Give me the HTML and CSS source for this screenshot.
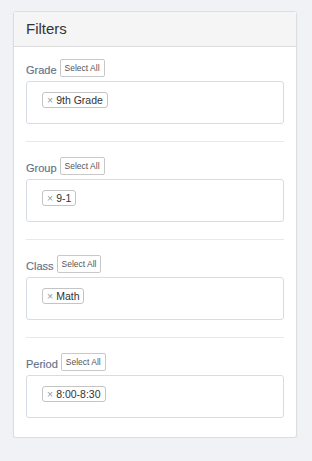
FILE: index.html
```html
<!DOCTYPE html>
<html lang="en">
<head>
    <meta charset="UTF-8">
    <meta name="viewport" content="width=device-width, initial-scale=1.0">
    <title>Filters</title>
    <link rel="stylesheet" href="styles.css">
</head>
<body>
    <div class="panel">
        <div class="panel-heading">Filters</div>
        <div class="panel-body">
            <div class="filter">
                <div class="filter-head">
                    <span class="filter-label">Grade</span>
                    <button class="select-all">Select All</button>
                </div>
                <div class="chosen">
                    <span class="tag"><span class="tag-x">&times;</span>9th Grade</span>
                </div>
            </div>
            <div class="filter">
                <div class="filter-head">
                    <span class="filter-label">Group</span>
                    <button class="select-all">Select All</button>
                </div>
                <div class="chosen">
                    <span class="tag"><span class="tag-x">&times;</span>9-1</span>
                </div>
            </div>
            <div class="filter">
                <div class="filter-head">
                    <span class="filter-label">Class</span>
                    <button class="select-all">Select All</button>
                </div>
                <div class="chosen">
                    <span class="tag"><span class="tag-x">&times;</span>Math</span>
                </div>
            </div>
            <div class="filter">
                <div class="filter-head">
                    <span class="filter-label">Period</span>
                    <button class="select-all">Select All</button>
                </div>
                <div class="chosen">
                    <span class="tag"><span class="tag-x">&times;</span>8:00-8:30</span>
                </div>
            </div>
        </div>
    </div>
</body>
</html>
```

FILE: styles.css
```css
body {
    font-family: "Liberation Sans", Arial, sans-serif;
    background-color: #f1f2f6;
    margin: 0;
    padding: 11px 15px 0 13px;
}

.panel {
    background-color: white;
    border: 1px solid #dcdde1;
    border-radius: 3px;
    box-shadow: 0 1px 2px rgba(0, 0, 0, 0.06);
}

.panel-heading {
    background-color: #f5f5f5;
    border-bottom: 1px solid #dddddd;
    color: #333;
    font-size: 15px;
    height: 34px;
    line-height: 34px;
    padding: 0 12px;
}

.panel-body {
    padding: 12px 12px 19px 12px;
}

.filter {
    padding-bottom: 17px;
    margin-bottom: 15px;
    border-bottom: 1px solid #e6e8ec;
}

.filter:last-child {
    padding-bottom: 0;
    margin-bottom: 0;
    border-bottom: none;
}

.filter-head {
    display: flex;
    align-items: center;
    gap: 3px;
    height: 18px;
    margin-bottom: 4px;
}

.filter-label {
    color: #627189;
    font-size: 11px;
    padding-top: 4px;
    -webkit-text-stroke: 0.15px #627189;
}

.select-all {
    font-family: "Liberation Sans", Arial, sans-serif;
    background-color: white;
    border: 1px solid #c8c8c8;
    border-radius: 2px;
    color: #555;
    font-size: 8.5px;
    height: 18px;
    padding: 0 4px;
}

.chosen {
    display: flex;
    align-items: flex-start;
    border: 1px solid #d6dce6;
    border-radius: 3px;
    height: 43px;
    padding: 10px 15px 0 15px;
    box-sizing: border-box;
}

.tag {
    border: 1px solid #c4c4c4;
    border-radius: 3px;
    color: #333;
    font-size: 10.5px;
    height: 16px;
    line-height: 14px;
    padding: 0 4px;
    box-sizing: border-box;
}

.tag-x {
    color: #999;
    margin-right: 3px;
}
```
